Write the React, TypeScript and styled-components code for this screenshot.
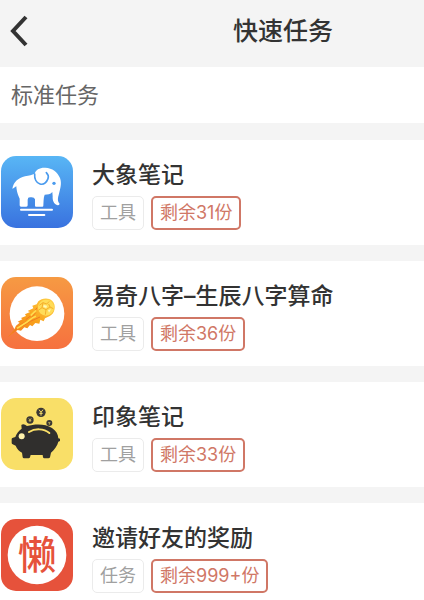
import React from "react";
import styled, { createGlobalStyle } from "styled-components";

const GlobalStyle = createGlobalStyle`
  * { box-sizing: border-box; }
  body {
    margin: 0;
    background: #f4f4f4;
    color: #333;
    font-family: Inter, "Noto Sans CJK SC", sans-serif;
  }
  h1, h2, h3, p, ul { margin: 0; padding: 0; }
`;

const Page = styled.main`
  display: flex;
  flex-direction: column;
  overflow: hidden;
`;

const Header = styled.header`
  display: grid;
  grid-template-columns: 142px 1fr;
  align-items: center;
  height: 67px;
  padding-bottom: 6px;
`;

const BackButton = styled.button`
  display: flex;
  justify-self: start;
  padding: 0 10px;
  border: 0;
  background: none;
  color: #333;
`;

const Title = styled.h1`
  text-align: center;
  font-size: 25px;
  line-height: 36px;
  font-weight: 500;
`;

const SectionTitle = styled.h2`
  padding: 12px 11px;
  background: #fff;
  color: #666;
  font-size: 22px;
  line-height: 32px;
  font-weight: 400;
`;

const TaskList = styled.ul`
  display: flex;
  flex-direction: column;
  gap: 16px;
  padding-top: 17px;
  list-style: none;
`;

const Task = styled.li`
  display: flex;
  gap: 19px;
  padding: 16px 1px;
  height: 105px;
  background: #fff;
`;

const AppIcon = styled.svg`
  flex: none;
  width: 72px;
  height: 72px;
  border-radius: 15px;
`;

const TaskBody = styled.div`
  display: flex;
  flex-direction: column;
  gap: 4px;
  padding-top: 3px;
`;

const TaskName = styled.h3`
  font-size: 23px;
  line-height: 33px;
  font-weight: 500;
  white-space: nowrap;
`;

const Tags = styled.div`
  display: flex;
  gap: 7px;
`;

const Tag = styled.span<{ $accent?: boolean }>`
  height: 34px;
  padding: 0 7px;
  border: ${(p) => (p.$accent ? "2px solid #d07766" : "1px solid #ebebeb")};
  border-radius: 5px;
  color: ${(p) => (p.$accent ? "#d07766" : "#a0a0a0")};
  font-size: 18px;
  line-height: ${(p) => (p.$accent ? 30 : 32)}px;
  white-space: nowrap;
`;

const ElephantIcon = () => (
  <AppIcon viewBox="4 30 216 216" aria-hidden="true">
    <defs>
      <linearGradient id="sky" x1="0" y1="0" x2="0" y2="1">
        <stop offset="0" stopColor="#58b6f5" />
        <stop offset="1" stopColor="#3972df" />
      </linearGradient>
    </defs>
    <rect x="4" y="30" width="216" height="216" fill="url(#sky)" />
    <path
      fill="#fff"
      d="M38 128C42 108 55 96 76 91C89 88 97 87 105 83C108 71 121 64 137 65C158 66 174 78 181 96C187 112 182 127 178 143C174 157 173 164 179 172C181 176 177 179 172 177C163 174 158 164 159 151L158 138C152 145 144 146 135 146C131 156 132 168 131 179Q131 182 128 182H109Q106 182 106 179V160Q104 154 96 154H91Q84 154 84 161V178Q84 182 80 182H64Q60 182 60 178V158C56 149 51 139 50 121C46 122 43 128 38 128Z"
    />
    <path
      d="M105 84C104 98 110 111 121 114C134 118 142 106 145 98C148 90 144 84 140 80"
      fill="none"
      stroke="#4a9bee"
      strokeWidth="5"
      strokeLinecap="round"
    />
    <circle cx="163" cy="112" r="5" fill="#4a9bee" />
    <path d="M64 191H157M88 207H134" stroke="#fff" strokeWidth="6" strokeLinecap="round" />
  </AppIcon>
);

const CometIcon = () => (
  <AppIcon viewBox="4 27 216 216" aria-hidden="true">
    <defs>
      <linearGradient id="sunset" x1="0" y1="0" x2="0" y2="1">
        <stop offset="0" stopColor="#f69a43" />
        <stop offset="1" stopColor="#f6713f" />
      </linearGradient>
      <linearGradient id="flame" x1="0" y1="1" x2="1" y2="0">
        <stop offset="0" stopColor="#f37b22" />
        <stop offset="0.5" stopColor="#f9a11b" />
        <stop offset="1" stopColor="#ffd34a" />
      </linearGradient>
    </defs>
    <rect x="4" y="27" width="216" height="216" fill="url(#sunset)" />
    <circle cx="112" cy="137" r="82" fill="#fff" />
    <path
      fill="url(#flame)"
      d="M24 208L44 184L49 173L60 164L54 161L68 154L64 150L79 144L76 139L91 132L84 129L101 121L98 113L111 109L116 100C125 91 146 87 158 99C171 112 166 137 149 145L136 151L132 160L122 155L119 167L107 165L98 175L91 171L83 181L74 178L64 188L54 186L41 195Z"
    />
    <path
      d="M39 195L63 170L88 157L108 134M69 174L92 160L121 147M78 155L99 139L112 119"
      fill="none"
      stroke="#f07a22"
      strokeWidth="3"
    />
    <path d="M52 181L82 162L99 149L109 145M93 143L109 127" fill="none" stroke="#ffdc4e" strokeWidth="5" />
    <circle cx="139" cy="119" r="24" fill="#ffdc58" />
    <path
      d="M119 112L130 104L141 108L149 100M130 104L127 119L116 127M127 119L139 125L151 117L161 122M151 117L147 108M139 125L137 140"
      fill="none"
      stroke="#f5ae2c"
      strokeWidth="3"
    />
    <path d="M132 111L142 113L140 120L131 117ZM145 126L154 124L148 134Z" fill="#fff7bd" />
  </AppIcon>
);

const PiggyIcon = () => (
  <AppIcon viewBox="4 30 216 216" aria-hidden="true">
    <rect x="4" y="30" width="216" height="216" fill="#f9df68" />
    <path
      fill="#302f2d"
      d="M65 111Q72 106 82 114C107 107 138 107 157 120C169 128 175 138 176 151L181 152V159L176 161C173 173 165 184 154 194L151 208Q150 211 146 211H134Q131 211 130 208L129 201H93L91 208Q90 211 87 211H73Q70 211 69 208L67 194Q54 188 48 173L39 169Q36 168 36 164V153Q36 150 40 149L47 147C50 137 57 129 66 122Z"
    />
    <path d="M88 132C106 121 132 121 149 135" fill="none" stroke="#f9df68" strokeWidth="6" strokeLinecap="round" />
    <circle cx="66" cy="145" r="9" fill="#fff3ad" />
    <circle cx="91" cy="96" r="11" fill="#3b3834" />
    <circle cx="124" cy="73" r="14" fill="#3b3834" />
    <circle cx="149" cy="105" r="9" fill="#3b3834" />
    <path d="M118 65L124 73L130 65M124 73V83M119 76H129" fill="none" stroke="#f9df68" strokeWidth="3" />
    <path d="M87 91L91 96L95 91M91 96V102M87 98H95M146 102L149 105L152 102M149 105V110" fill="none" stroke="#f9df68" strokeWidth="2" />
  </AppIcon>
);

const LazyIcon = () => (
  <AppIcon viewBox="4 30 216 216" role="img" aria-label="懒">
    <rect x="4" y="30" width="216" height="216" fill="#e6523b" />
    <circle cx="112" cy="138" r="88" fill="#fff" />
    <text
      x="112"
      y="181"
      textAnchor="middle"
      fill="#e6523b"
      fontFamily="'Noto Sans CJK SC', sans-serif"
      fontSize="116"
      fontWeight="500"
    >
      懒
    </text>
  </AppIcon>
);

const tasks = [
  { name: "大象笔记", kind: "工具", left: "剩余31份", Icon: ElephantIcon },
  { name: "易奇八字–生辰八字算命", kind: "工具", left: "剩余36份", Icon: CometIcon },
  { name: "印象笔记", kind: "工具", left: "剩余33份", Icon: PiggyIcon },
  { name: "邀请好友的奖励", kind: "任务", left: "剩余999+份", Icon: LazyIcon },
];

export default function App() {
  return (
    <>
      <GlobalStyle />
      <Page>
        <Header>
          <BackButton type="button" aria-label="返回">
            <svg width="18" height="32" viewBox="0 0 18 32" fill="none" stroke="currentColor" strokeWidth="4">
              <path d="M16 2L3 16L16 30" />
            </svg>
          </BackButton>
          <Title>快速任务</Title>
        </Header>
        <SectionTitle>标准任务</SectionTitle>
        <TaskList>
          {tasks.map(({ name, kind, left, Icon }) => (
            <Task key={name}>
              <Icon />
              <TaskBody>
                <TaskName>{name}</TaskName>
                <Tags>
                  <Tag>{kind}</Tag>
                  <Tag $accent>{left}</Tag>
                </Tags>
              </TaskBody>
            </Task>
          ))}
        </TaskList>
      </Page>
    </>
  );
}
